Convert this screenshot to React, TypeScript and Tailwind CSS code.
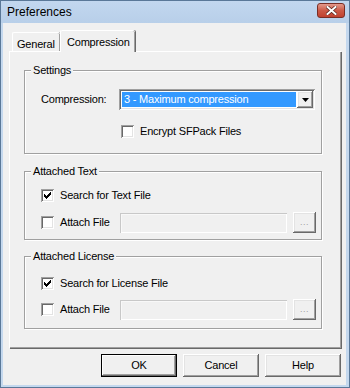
import type { ReactNode } from "react"

const raised =
  "shadow-[inset_-1px_-1px_0_#696969,inset_1px_1px_0_#ffffff,inset_-2px_-2px_0_#a0a0a0,inset_2px_2px_0_#e3e3e3]"
const sunken =
  "shadow-[inset_1px_1px_0_#a0a0a0,inset_-1px_-1px_0_#ffffff,inset_2px_2px_0_#696969,inset_-2px_-2px_0_#e3e3e3]"

function CheckBox({ checked }: { checked?: boolean }) {
  return (
    <span className={`w-[13px] h-[13px] shrink-0 bg-white flex items-center justify-center ${sunken}`}>
      {checked && (
        <svg width="7" height="7" viewBox="0 0 7 7" shapeRendering="crispEdges">
          <path d="M0 2h1v1H0zM0 3h2v1H0zM0 4h3v1H0zM1 5h2v1H1zM2 6h1v1H2zM6 0h1v3H6zM5 1h1v3H5zM4 2h1v3H4zM3 3h1v3H3z" fill="#000" />
        </svg>
      )}
    </span>
  )
}

function Check({ label, checked, className = "" }: { label: string; checked?: boolean; className?: string }) {
  return (
    <div className={`flex items-center gap-[6px] h-[13px] ${className}`}>
      <CheckBox checked={checked} />
      <span className="leading-[13px]">{label}</span>
    </div>
  )
}

function Group({ title, children, className = "" }: { title: string; children: ReactNode; className?: string }) {
  return (
    <fieldset
      className={`w-[298px] border border-[#a0a0a0] shadow-[inset_1px_1px_0_#ffffff,1px_1px_0_#ffffff] ${className}`}
    >
      <legend className="ml-[6px] px-[2px] leading-[13px] bg-[#f0f0f0]">{title}</legend>
      {children}
    </fieldset>
  )
}

function AttachRow({ className = "" }: { className?: string }) {
  return (
    <div className={`flex items-center h-[21px] ${className}`}>
      <Check label="Attach File" className="w-[79px]" />
      <div className="w-[167px] h-[20px] bg-[#f0f0f0] shadow-[inset_1px_1px_0_#c8c8c8,inset_-1px_-1px_0_#ffffff,inset_2px_2px_0_#f8f8f8]" />
      <div
        className={`ml-[6px] w-[23px] h-[21px] bg-[#f0f0f0] flex items-center justify-center text-[#a0a0a0] text-[9px] tracking-[0.5px] ${raised}`}
      >
        ...
      </div>
    </div>
  )
}

function DlgButton({ label, isDefault }: { label: string; isDefault?: boolean }) {
  return (
    <div
      className={`w-[76px] h-[23px] flex items-center justify-center bg-[#f0f0f0] ${
        isDefault
          ? "shadow-[inset_0_0_0_1px_#000000,inset_-2px_-2px_0_#696969,inset_2px_2px_0_#ffffff,inset_-3px_-3px_0_#a0a0a0]"
          : raised
      }`}
    >
      {label}
    </div>
  )
}

export default function App() {
  return (
    <div className="w-[350px] h-[388px] flex flex-col bg-[#c4d8ee] border border-[#5a7898] font-['Liberation_Sans',Arial,sans-serif] text-[11px] tracking-[-0.2px] text-black">
      {/* title bar */}
      <div className="h-[22px] shrink-0 flex items-center justify-between pl-[6px] pr-[4px] bg-gradient-to-b from-[#c2d7ef] to-[#b8cfe9]">
        <span className="text-[12px] tracking-normal text-black">Preferences</span>
        <div className="w-[28px] h-[15px] mb-[4px] rounded-[3px] border border-[#7a2e25] bg-gradient-to-b from-[#e3998c] via-[#cc5a47] to-[#c0412f] flex items-center justify-center">
          <svg width="11" height="9" viewBox="0 0 11 9">
            <path d="M1.5 1 L9.5 8 M9.5 1 L1.5 8" stroke="#5a241c" strokeWidth="3.4" strokeLinecap="square" />
            <path d="M1.5 1 L9.5 8 M9.5 1 L1.5 8" stroke="#ffffff" strokeWidth="2" strokeLinecap="square" />
          </svg>
        </div>
      </div>

      {/* client area */}
      <div className="flex-1 ml-[2px] mr-[3px] mb-[2px] bg-[#f0f0f0] pl-[6px] pt-[7px]">
        {/* tabs */}
        <div className="relative z-10 -mb-px flex items-end h-[22px] pl-[3px]">
          <div className="mb-px w-[48px] h-[19px] pl-[4px] pt-[3px] rounded-t-[2px] border-l border-t border-white shadow-[inset_-1px_0_0_#a0a0a0,1px_0_0_#696969]">
            General
          </div>
          <div className="w-[75px] h-[22px] pl-[6px] pt-[3px] rounded-t-[2px] bg-[#f0f0f0] border-l border-t border-white shadow-[inset_-1px_0_0_#a0a0a0,1px_0_0_#696969]">
            Compression
          </div>
        </div>

        {/* tab page */}
        <div className="w-[332px] h-[297px] border-l border-t border-white shadow-[inset_-1px_-1px_0_#a0a0a0,1px_1px_0_#696969] pl-[14px] pt-[12px]">
          <Group title="Settings">
            <div className="pl-[16px] pt-[12px] pb-[15px]">
              <div className="flex items-center h-[21px]">
                <span className="w-[78px]">Compression:</span>
                <div className={`w-[196px] h-[21px] bg-white p-[2px] flex ${sunken}`}>
                  <div className="flex-1 m-px bg-[#3399ff] text-white leading-[15px] pl-[2px]">3 - Maximum compression</div>
                  <div className={`w-[16px] bg-[#f0f0f0] flex items-center justify-center ${raised}`}>
                    <svg width="7" height="4" viewBox="0 0 7 4">
                      <path d="M0 0h7L3.5 4z" fill="#000" />
                    </svg>
                  </div>
                </div>
              </div>
              <Check label="Encrypt SFPack Files" className="mt-[15px] ml-[80px]" />
            </div>
          </Group>

          <Group title="Attached Text" className="mt-[11px]">
            <div className="pl-[16px] pt-[11px] pb-[6px]">
              <Check label="Search for Text File" checked />
              <AttachRow className="mt-[10px]" />
            </div>
          </Group>

          <Group title="Attached License" className="mt-[10px]">
            <div className="pl-[16px] pt-[14px] pb-[8px]">
              <Check label="Search for License File" checked />
              <AttachRow className="mt-[9px]" />
            </div>
          </Group>
        </div>

        {/* buttons */}
        <div className="w-[332px] mt-[6px] flex justify-end gap-[6px]">
          <DlgButton label="OK" isDefault />
          <DlgButton label="Cancel" />
          <DlgButton label="Help" />
        </div>
      </div>
    </div>
  )
}
